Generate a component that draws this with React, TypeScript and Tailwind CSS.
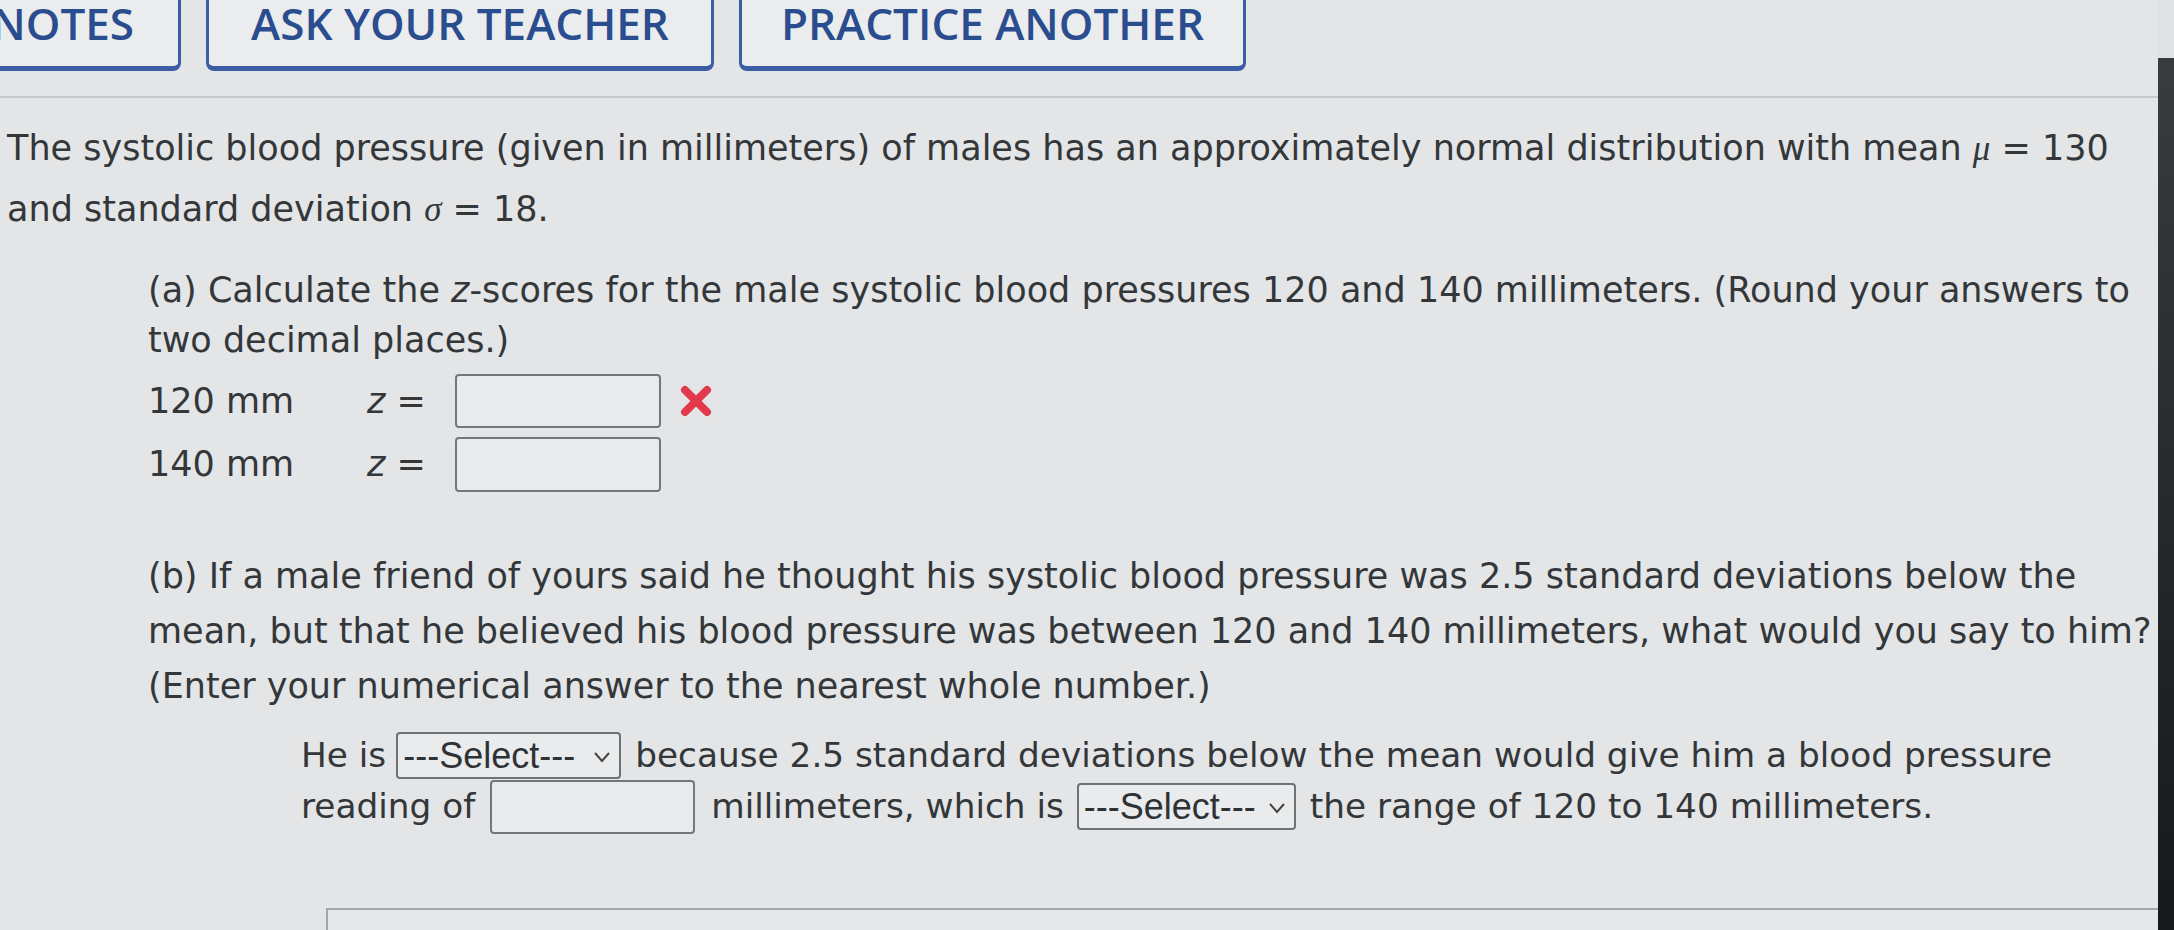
import React from 'react';

const body = { fontFamily: '"DejaVu Sans", Verdana, sans-serif' };
const sel = { fontFamily: '"Liberation Sans", Arial, sans-serif' };
const serif = { fontFamily: '"Liberation Serif", serif' };

function TopButton({ label, className = '' }: { label: string; className?: string }) {
  return (
    <div
      className={`h-[71px] border-[3px] border-t-0 border-b-[5px] border-[#3a5da6] rounded-b-[8px] bg-[#eaeced] flex items-start pt-[3px] overflow-hidden ${className}`}
      style={{ fontFamily: '"Open Sans", sans-serif' }}
    >
      <span className="text-[44px] font-semibold text-[#2a4d8f] whitespace-nowrap leading-[40px]">{label}</span>
    </div>
  );
}

function Box({ className = '' }: { className?: string }) {
  return <div className={`bg-[#e8eaeb] border-2 border-[#74777a] rounded-[4px] shrink-0 ${className}`} />;
}

function Select({ className = '' }: { className?: string }) {
  return (
    <div
      className={`h-[47px] border-2 border-[#6f7173] rounded-[4px] bg-[#e9ebec] flex items-center justify-between pl-[5px] pr-[8px] shrink-0 ${className}`}
      style={sel}
    >
      <span className="text-[36px] leading-[40px] text-[#2f3235]">---Select---</span>
      <svg width="18" height="12" viewBox="0 0 18 12" className="mt-[2px] shrink-0">
        <path d="M2 2 L9 10 L16 2" fill="none" stroke="#444" strokeWidth="2" />
      </svg>
    </div>
  );
}

function RedX() {
  return (
    <svg width="34" height="34" viewBox="0 0 34 34">
      <path d="M6 6 L28 28 M28 6 L6 28" stroke="#e23a4c" strokeWidth="8" strokeLinecap="round" />
    </svg>
  );
}

export default function App() {
  return (
    <div className="w-[2174px] h-[930px] overflow-hidden bg-[#e3e5e6] flex text-[#34373a]" style={body}>
      <div className="flex-1 flex flex-col">
        {/* Top buttons */}
        <div className="flex gap-[25px] items-start">
          <TopButton label="NOTES" className="w-[181px] border-l-0 rounded-bl-none justify-end pr-[44px]" />
          <TopButton label="ASK YOUR TEACHER" className="w-[508px] justify-center" />
          <TopButton label="PRACTICE ANOTHER" className="w-[507px] justify-center" />
        </div>
        <div className="mt-[25px] h-[2px] bg-[#c6c8c9]" />

        {/* Intro */}
        <div className="mt-[20px] pl-[7px] text-[35px] leading-[61px] whitespace-nowrap">
          <div>
            The systolic blood pressure (given in millimeters) of males has an approximately normal distribution with mean{' '}
            <i style={serif}>μ</i> = 130
          </div>
          <div>
            and standard deviation <i style={serif}>σ</i> = 18.
          </div>
        </div>

        {/* Part a */}
        <div className="mt-[25px] pl-[148px] text-[35px] whitespace-nowrap">
          <div className="leading-[50px]">
            (a) Calculate the <i>z</i>-scores for the male systolic blood pressures 120 and 140 millimeters. (Round your answers to
          </div>
          <div className="leading-[50px]">two decimal places.)</div>
          <div className="mt-[9px] flex items-center h-[54px]">
            <span className="w-[219px]">120 mm</span>
            <span className="w-[88px]"><i>z</i> =</span>
            <Box className="w-[206px] h-[54px]" />
            <span className="ml-[18px] flex"><RedX /></span>
          </div>
          <div className="mt-[9px] flex items-center h-[55px]">
            <span className="w-[219px]">140 mm</span>
            <span className="w-[88px]"><i>z</i> =</span>
            <Box className="w-[206px] h-[55px]" />
          </div>
        </div>

        {/* Part b */}
        <div className="mt-[57px] pl-[148px] text-[35px] whitespace-nowrap">
          <div className="leading-[55px]">
            (b) If a male friend of yours said he thought his systolic blood pressure was 2.5 standard deviations below the
          </div>
          <div className="leading-[55px]">
            mean, but that he believed his blood pressure was between 120 and 140 millimeters, what would you say to him?
          </div>
          <div className="leading-[55px]">(Enter your numerical answer to the nearest whole number.)</div>
        </div>

        <div className="mt-[16px] pl-[301px] text-[34.3px] whitespace-nowrap">
          <div className="flex items-center h-[51px]">
            <span>He is</span>
            <Select className="ml-[10px] w-[225px]" />
            <span className="ml-[14px]">because 2.5 standard deviations below the mean would give him a blood pressure</span>
          </div>
          <div className="flex items-center h-[51px]">
            <span>reading of</span>
            <Box className="ml-[15px] w-[205px] h-[54px]" />
            <span className="ml-[16px]">millimeters, which is</span>
            <Select className="ml-[13px] w-[219px]" />
            <span className="ml-[14px]">the range of 120 to 140 millimeters.</span>
          </div>
        </div>

        <div className="mt-[76px] ml-[326px] flex-1 border-t-2 border-l-2 border-[#a4a6a8] bg-[#e5e7e8]" />
      </div>
      <div className="w-[16px] flex flex-col">
        <div className="h-[58px] bg-[#dfe1e2]" />
        <div className="flex-1 bg-linear-to-b from-[#3a3b3e] to-[#17181a]" />
      </div>
    </div>
  );
}
